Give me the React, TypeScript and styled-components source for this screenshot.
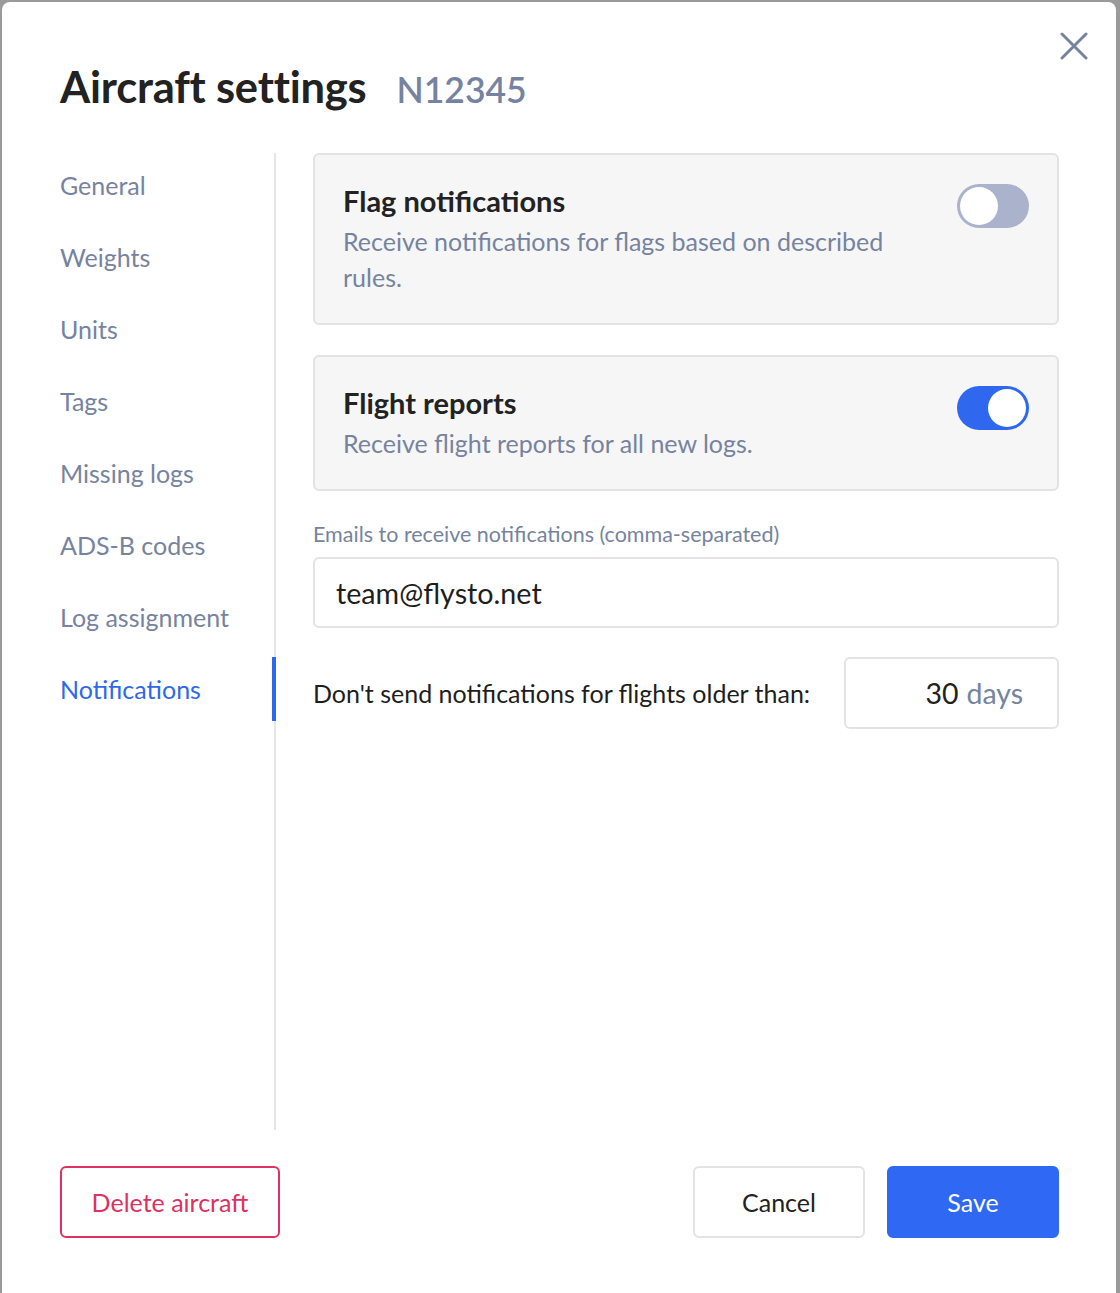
import React from "react";
import styled, { createGlobalStyle } from "styled-components";

const Global = createGlobalStyle`
  html, body { margin: 0; padding: 0; height: 100%; }
  body { background: #9a9a9a; font-family: Lato, "Open Sans", sans-serif; overflow: hidden; }
  * { box-sizing: border-box; }
`;

const Overlay = styled.div`
  height: 100vh;
  padding: 2px 4px 0 2px;
  overflow: hidden;
`;

const Modal = styled.div`
  position: relative;
  background: #fff;
  border-radius: 8px 8px 0 0;
  height: 1310px;
  padding: 59px 57px 0 58px;
  display: flex;
  flex-direction: column;
`;

const Header = styled.div`
  display: flex;
  align-items: baseline;
  gap: 30px;
  height: 92px;
`;

const Title = styled.h1`
  margin: 0;
  font-size: 43.5px;
  line-height: 50px;
  font-weight: 700;
  color: #222;
  letter-spacing: -0.2px;
`;

const Tail = styled.span`
  font-size: 35.5px;
  font-weight: 600;
  color: #7683a0;
`;

const Close = styled.button`
  position: absolute;
  top: 27px;
  right: 25px;
  width: 34px;
  height: 34px;
  padding: 0;
  border: none;
  background: none;
  display: flex;
  align-items: center;
  justify-content: center;
`;

const Body = styled.div`
  display: grid;
  grid-template-columns: 216px 1fr;
  column-gap: 37px;
  height: 977px;
`;

const Sidebar = styled.nav`
  border-right: 2px solid #e6e6e6;
  display: flex;
  flex-direction: column;
  gap: 8px;
`;

const NavItem = styled.div<{ $active?: boolean }>`
  height: 64px;
  display: flex;
  align-items: center;
  font-size: 25px;
  color: ${(p) => (p.$active ? "#2f68ea" : "#7683a0")};
  margin-right: -2px;
  border-right: 4px solid ${(p) => (p.$active ? "#2f68ea" : "transparent")};
`;

const Content = styled.div`
  display: flex;
  flex-direction: column;
`;

const Card = styled.div`
  background: #f6f6f6;
  border: 2px solid #e3e3e3;
  border-radius: 6px;
  padding: 28px 28px 28px 28px;
  display: flex;
  justify-content: space-between;
  align-items: flex-start;
  margin-bottom: 30px;
`;

const CardText = styled.div`
  max-width: 580px;
`;

const CardTitle = styled.div`
  font-size: 29px;
  line-height: 36px;
  font-weight: 700;
  color: #222;
  margin-bottom: 4px;
`;

const CardDesc = styled.div`
  font-size: 25px;
  line-height: 36px;
  color: #7683a0;
`;

const Toggle = styled.div<{ $on?: boolean }>`
  flex: none;
  width: 72px;
  height: 44px;
  margin-top: 1px;
  border-radius: 22px;
  background: ${(p) => (p.$on ? "#2f68ee" : "#aab3cb")};
  padding: 3px;
  display: flex;
  justify-content: ${(p) => (p.$on ? "flex-end" : "flex-start")};
`;

const Knob = styled.div`
  width: 38px;
  height: 38px;
  border-radius: 50%;
  background: #fff;
`;

const Label = styled.div`
  font-size: 21.5px;
  line-height: 24px;
  color: #7683a0;
  margin-top: 1px;
  margin-bottom: 11px;
`;

const Input = styled.div`
  height: 71px;
  border: 2px solid #e3e3e3;
  border-radius: 6px;
  padding: 0 21px;
  display: flex;
  align-items: center;
  font-size: 28.7px;
  color: #1e1e1e;
  margin-bottom: 29px;
`;

const Row = styled.div`
  display: flex;
  align-items: center;
  justify-content: space-between;
`;

const RowText = styled.div`
  font-size: 25px;
  color: #1e1e1e;
`;

const DaysBox = styled.div`
  width: 215px;
  height: 72px;
  border: 2px solid #e3e3e3;
  border-radius: 6px;
  display: flex;
  align-items: center;
  justify-content: flex-end;
  padding-right: 34px;
  font-size: 28.5px;
  gap: 8px;
`;

const Num = styled.span`
  color: #222;
`;
const Unit = styled.span`
  color: #7683a0;
`;

const Footer = styled.div`
  display: flex;
  align-items: center;
  margin-top: 36px;
  gap: 22px;
`;

const Spacer = styled.div`
  flex: 1;
`;

const Button = styled.button<{ $variant: "danger" | "plain" | "primary"; $w: number }>`
  width: ${(p) => p.$w}px;
  height: 72px;
  border-radius: 6px;
  font-family: Lato, "Open Sans", sans-serif;
  font-size: 25px;
  cursor: pointer;
  border: 2px solid
    ${(p) => (p.$variant === "danger" ? "#e0305f" : p.$variant === "plain" ? "#e3e3e3" : "#2f68f2")};
  background: ${(p) => (p.$variant === "primary" ? "#2f68f2" : "#fff")};
  color: ${(p) => (p.$variant === "danger" ? "#e0305f" : p.$variant === "plain" ? "#222" : "#fff")};
`;

const nav = ["General", "Weights", "Units", "Tags", "Missing logs", "ADS-B codes", "Log assignment", "Notifications"];

export default function App() {
  return (
    <>
      <Global />
      <Overlay>
        <Modal>
          <Close aria-label="Close">
            <svg width="28" height="28" viewBox="0 0 28 28">
              <path d="M2 2 L26 26 M26 2 L2 26" stroke="#7683a0" strokeWidth="3" strokeLinecap="round" />
            </svg>
          </Close>
          <Header>
            <Title>Aircraft settings</Title>
            <Tail>N12345</Tail>
          </Header>
          <Body>
            <Sidebar>
              {nav.map((n) => (
                <NavItem key={n} $active={n === "Notifications"}>
                  {n}
                </NavItem>
              ))}
            </Sidebar>
            <Content>
              <Card>
                <CardText>
                  <CardTitle>Flag notifications</CardTitle>
                  <CardDesc>Receive notifications for flags based on described rules.</CardDesc>
                </CardText>
                <Toggle>
                  <Knob />
                </Toggle>
              </Card>
              <Card>
                <CardText>
                  <CardTitle>Flight reports</CardTitle>
                  <CardDesc>Receive flight reports for all new logs.</CardDesc>
                </CardText>
                <Toggle $on>
                  <Knob />
                </Toggle>
              </Card>
              <Label>Emails to receive notifications (comma-separated)</Label>
              <Input>team@flysto.net</Input>
              <Row>
                <RowText>Don't send notifications for flights older than:</RowText>
                <DaysBox>
                  <Num>30</Num>
                  <Unit>days</Unit>
                </DaysBox>
              </Row>
            </Content>
          </Body>
          <Footer>
            <Button $variant="danger" $w={220}>Delete aircraft</Button>
            <Spacer />
            <Button $variant="plain" $w={172}>Cancel</Button>
            <Button $variant="primary" $w={172}>Save</Button>
          </Footer>
        </Modal>
      </Overlay>
    </>
  );
}
